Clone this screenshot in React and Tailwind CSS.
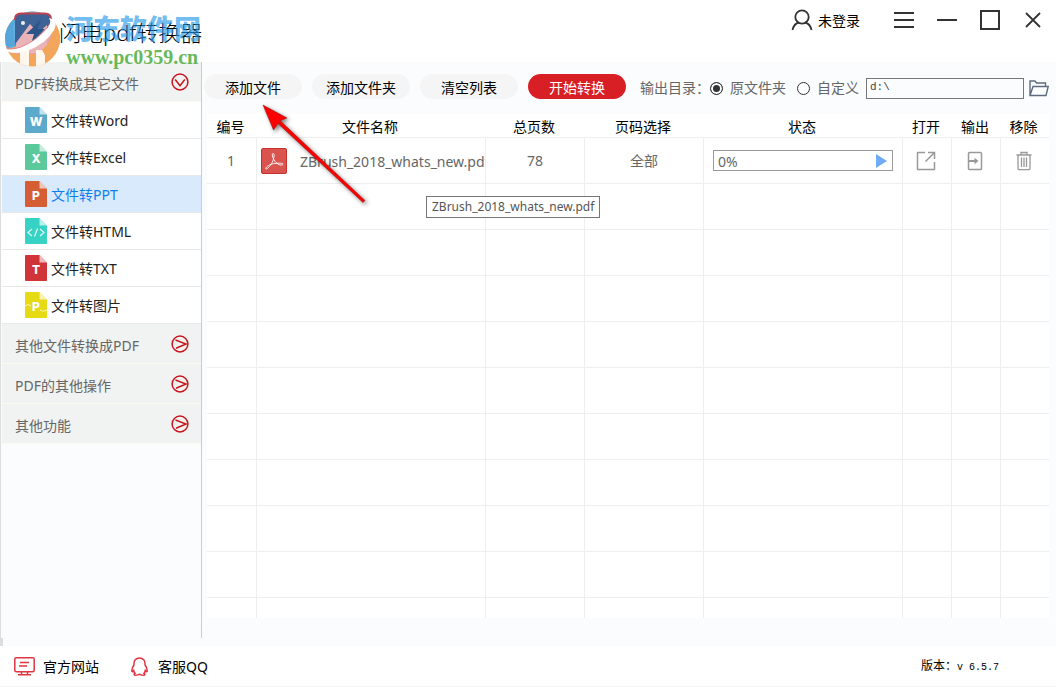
import React from "react";

const navItems = [
  { label: "文件转Word", letter: "W", color: "#5ba9cb" },
  { label: "文件转Excel", letter: "X", color: "#5bc99b" },
  { label: "文件转PPT", letter: "P", color: "#d55d33", active: true },
  { label: "文件转HTML", code: true, color: "#36d3c4" },
  { label: "文件转TXT", letter: "T", color: "#d13438" },
  { label: "文件转图片", letter: "P", color: "#e6da14", wave: true },
];

function FileIcon({ letter, color, code, wave }) {
  return (
    <svg className="h-[26px] w-[22px] shrink-0" viewBox="0 0 22 26" aria-hidden="true">
      <path d="M1 0H14.5L22 7.5V25a1 1 0 0 1-1 1H1a1 1 0 0 1-1-1V1a1 1 0 0 1 1-1Z" fill={color} />
      <path d="M14.5 0L22 7.5H14.5Z" fill="#fff" fillOpacity="0.65" />
      {wave && <path d="M0 14q3-3 6 0M15 18q3 2.500 7 0" fill="none" stroke="#fff" strokeOpacity="0.7" />}
      {code ? (
        <path d="M7 11L3 14.500L7 18M15 11L19 14.500L15 18M12.500 10.500L9.500 18.500" fill="none" stroke="#fff" strokeOpacity="0.85" strokeWidth="1.200" />
      ) : (
        <text x="11" y="19" textAnchor="middle" fontFamily="Inter, sans-serif" fontWeight="800" fontSize="12" fill="#fff">
          {letter}
        </text>
      )}
    </svg>
  );
}

function CircleArrow({ down }) {
  return (
    <svg className="size-[18px] shrink-0" viewBox="0 0 18 18" fill="none" stroke="#c9151e" strokeWidth="1.500" aria-hidden="true">
      <circle cx="9" cy="9" r="7.900" />
      <path d={down ? "M4.200 6.500L9 12.700L13.800 6.500" : "M4.500 5L15 9L5 13.300"} />
    </svg>
  );
}

function NavGroup({ label, down }) {
  return (
    <button type="button" aria-expanded={!!down} className="flex h-10 w-full items-center justify-between border-b border-[#fcfaf0] bg-[#f1f3f2] pt-px pr-3 pl-[13px] text-sm text-[#666]">
      <span className="pt-[3px]">{label}</span>
      <CircleArrow down={down} />
    </button>
  );
}

function AppLogo() {
  return (
    <svg className="h-[58px] w-[58px]" viewBox="0 0 58 58" aria-hidden="true">
      <defs>
        <clipPath id="logo-disc"><circle cx="29.500" cy="29" r="27.500" /></clipPath>
      </defs>
      <g clipPath="url(#logo-disc)">
        <rect width="58" height="58" fill="#f3a55c" />
        <path d="M0 0H58V8L46 16L30 32L0 40Z" fill="#62b0e2" />
        <path d="M12 24V44H49V12L44 14Z" fill="#e3a3a8" />
      </g>
      <path d="M12 34V9Q12 3 18 3H42Q48 3 48 9V16L34 24L12 36Z" fill="#3d6295" />
      <path d="M12 10V9Q12 3.500 18 3.500H42Q48 3.500 48 9V12" fill="none" stroke="#c2414f" strokeWidth="2" />
      <path d="M13 33L27 14L35 23L44 15V43H13Z" fill="#eab3b7" />
      <path d="M38 10L23 24H31L28 34L42 19H34Z" fill="#2c5489" />
      <g clipPath="url(#logo-disc)">
        <path d="M12 10Q8 24 13 35L4 38L0 20Z" fill="#57a6db" />
        <path d="M17 40H26V58H17ZM33 40H42V58H33Z" fill="#fff6ec" />
        <path d="M49 12Q52 29 39 40L45 50L58 34V12Z" fill="#f3a55c" />
      </g>
      <path d="M2 39Q7 46 24 41Q43 34 51 20Q56 10 46 8Q50 13 41 22T20 36Q9 41 2 39Z" fill="#fff" />
      <path d="M3 36Q5 41 18 37Q34 31 46 15" fill="none" stroke="#e3878b" />
      <circle cx="20" cy="13" r="2" fill="#fff" fillOpacity="0.9" />
    </svg>
  );
}

function TitleBar() {
  return (
    <header className="flex h-[62px] items-start justify-between bg-white">
      <div className="relative h-full w-[210px]">
        <h1 className="pt-[18px] pl-[59px] text-[22px] leading-[28px] font-light whitespace-nowrap text-black">闪电pdf转换器</h1>
        <div className="pointer-events-none absolute top-[10px] left-[3px]">
          <AppLogo />
        </div>
        <div className="pointer-events-none absolute top-[13px] left-[66px] z-10 whitespace-nowrap">
          <p className="text-[27px] leading-[32px] font-black text-[#2196ea]/65">河东软件网</p>
          <p className="font-['Liberation_Serif',serif] text-[20px] leading-[24px] font-bold text-[#68b95b]">www.pc0359.cn</p>
        </div>
      </div>
      <div className="flex h-10 items-center pr-[14px] text-[#333]">
        <button type="button" className="flex items-center gap-[5px] text-sm text-black">
          <svg className="size-[22px]" viewBox="0 0 22 22" fill="none" stroke="#333" strokeWidth="1.800" aria-hidden="true">
            <circle cx="11" cy="8" r="6.700" />
            <path d="M1.500 21Q3 14.500 8 13.500M14 13.500Q19 14.500 20.500 21" />
          </svg>
          <span className="pt-[2px]">未登录</span>
        </button>
        <button type="button" aria-label="菜单" className="ml-[33px]">
          <svg className="size-[22px]" viewBox="0 0 22 22" stroke="currentColor" strokeWidth="2" aria-hidden="true"><path d="M1 4H21M1 11H21M1 18H21" /></svg>
        </button>
        <button type="button" aria-label="最小化" className="ml-[21px]">
          <svg className="size-[22px]" viewBox="0 0 22 22" stroke="currentColor" strokeWidth="2" aria-hidden="true"><path d="M1 11H21" /></svg>
        </button>
        <button type="button" aria-label="最大化" className="ml-[21px]">
          <svg className="size-[22px]" viewBox="0 0 22 22" fill="none" stroke="currentColor" strokeWidth="2" aria-hidden="true"><rect x="2" y="2" width="18" height="18" /></svg>
        </button>
        <button type="button" aria-label="关闭" className="ml-[23px]">
          <svg className="size-[18px]" viewBox="0 0 18 18" stroke="currentColor" strokeWidth="1.800" aria-hidden="true"><path d="M2 2L16 16M16 2L2 16" /></svg>
        </button>
      </div>
    </header>
  );
}

function Sidebar() {
  return (
    <div className="flex w-[202px] shrink-0 flex-col">
      <nav className="flex-1 border-r border-l border-[#ccc] border-l-[#ddd] pl-px">
        <NavGroup label="PDF转换成其它文件" down />
        <ul>
          {navItems.map((item) => (
            <li key={item.label} className="border-b border-[#e8e8e8]">
              <a href="#" className={item.active ? "flex h-9 items-center gap-1 bg-[#d8eafc] pl-[23px] text-sm text-[#0d7ef0]" : "flex h-9 items-center gap-1 bg-white pl-[23px] text-sm text-[#222]"}>
                <FileIcon {...item} />
                <span className="pt-[2px]">{item.label}</span>
              </a>
            </li>
          ))}
        </ul>
        <NavGroup label="其他文件转换成PDF" />
        <NavGroup label="PDF的其他操作" />
        <NavGroup label="其他功能" />
      </nav>
      <div className="h-2 w-[3px] bg-[#ddd]" />
    </div>
  );
}

function ToolButton({ children, primary }) {
  return (
    <button type="button" className={primary ? "h-[25px] w-[98px] rounded-full bg-[#d81f26] pt-[3px] text-sm leading-[22px] text-white" : "h-[25px] w-[98px] rounded-full bg-[#f5f5f5] pt-[3px] text-sm leading-[22px] text-black"}>
      {children}
    </button>
  );
}

const radioClass = "size-[13px] appearance-none rounded-full border border-[#333] bg-white checked:border-[#333] checked:bg-[#333] checked:shadow-[inset_0_0_0_2px_#fff]";

function Toolbar() {
  return (
    <div className="flex h-[52px] items-center pr-[7px] pl-[2px]">
      <div className="flex gap-[10px] pb-[3px]">
        <ToolButton>添加文件</ToolButton>
        <ToolButton>添加文件夹</ToolButton>
        <ToolButton>清空列表</ToolButton>
        <ToolButton primary>开始转换</ToolButton>
      </div>
      <div role="radiogroup" aria-label="输出目录" className="ml-[14px] flex items-center text-sm whitespace-nowrap text-[#666]">
        <span className="w-[70px]">输出目录：</span>
        <label className="flex items-center gap-[7px]">
          <input type="radio" name="output" defaultChecked className={radioClass} />
          原文件夹
        </label>
        <label className="ml-[11px] flex items-center gap-[7px]">
          <input type="radio" name="output" className={radioClass} />
          自定义
        </label>
      </div>
      <input type="text" aria-label="自定义目录" defaultValue="d:\" className="ml-[7px] h-[21px] min-w-0 flex-1 border border-[#777] bg-transparent px-[3px] pb-[2px] font-['Liberation_Mono',monospace] text-[11px] leading-4 text-[#444]" />
      <button type="button" aria-label="选择文件夹" className="ml-[5px]">
        <svg className="h-[17px] w-5" viewBox="0 0 20 17" fill="none" stroke="#606b80" strokeWidth="1.400" aria-hidden="true">
          <path d="M1 15.500V1H6L7.500 3H16.500V6M1 15.500L4 6.500H19.200L17 15.500Z" />
        </svg>
      </button>
    </div>
  );
}

const columns = ["编号", "文件名称", "总页数", "页码选择", "状态", "打开", "输出", "移除"];
const cell = "h-[46px] border-r border-b border-[#eee] p-0 last:border-r-0";

function FileTable() {
  return (
    <div className="mr-[7px] ml-[5px] bg-white">
      <table className="w-full table-fixed border-separate border-spacing-0 text-center text-sm text-[#666]">
        <colgroup>
          <col className="w-[50px]" />
          <col />
          <col className="w-[99px]" />
          <col className="w-[119px]" />
          <col className="w-[199px]" />
          <col className="w-[49px]" />
          <col className="w-[49px]" />
          <col className="w-[48px]" />
        </colgroup>
        <thead>
          <tr>
            {columns.map((name) => (
              <th key={name} scope="col" className="h-6 border-b border-[#eee] p-0 pt-[3px] pr-[3px] leading-5 font-normal text-black">{name}</th>
            ))}
          </tr>
        </thead>
        <tbody>
          <tr>
            <td className={cell}><span className="pr-px">1</span></td>
            <td className={cell}>
              <div className="flex items-center overflow-hidden pl-1 whitespace-nowrap">
                <svg className="size-[26px] shrink-0" viewBox="0 0 26 26" aria-hidden="true">
                  <rect x="0.500" y="0.500" width="25" height="25" rx="1.500" fill="#d9534f" stroke="#c9302c" />
                  <path d="M12 5.500C10 6 12.500 12 15 14.500S21 17.800 22 16.300S14 14.800 10 16.300S4 20.500 5 21S10.500 17 12 12.500S13.500 5.300 12 5.500Z" fill="none" stroke="#fff" strokeOpacity="0.9" />
                </svg>
                <span className="ml-[13px] pt-[2px]">ZBrush_2018_whats_new.pdf</span>
              </div>
            </td>
            <td className={cell}>78</td>
            <td className={cell}>全部</td>
            <td className={cell}>
              <div className="mx-[9px] flex h-[21px] items-center justify-between border border-[#999] pr-[5px] pl-1">
                <span className="pt-[2px]">0%</span>
                <button type="button" aria-label="开始">
                  <svg className="h-[14px] w-[11px]" viewBox="0 0 11 14" fill="#6faaf5" aria-hidden="true"><path d="M0 0L11 7L0 14Z" /></svg>
                </button>
              </div>
            </td>
            <td className={cell}>
              <button type="button" aria-label="打开" className="mx-auto block pr-[2px]">
                <svg className="size-5" viewBox="0 0 20 20" fill="none" stroke="#999" strokeWidth="1.500" aria-hidden="true">
                  <path d="M9 1.500H2Q1.500 1.500 1.500 2V18Q1.500 18.500 2 18.500H18Q18.500 18.500 18.500 18V11M12 1.500H18.500V8M18.500 1.500L9.500 10.500" />
                </svg>
              </button>
            </td>
            <td className={cell}>
              <button type="button" aria-label="输出" className="mx-auto block pr-[2px]">
                <svg className="h-5 w-4" viewBox="0 0 16 20" fill="none" stroke="#999" strokeWidth="1.500" aria-hidden="true">
                  <rect x="1.500" y="1.500" width="13" height="17" rx="1" />
                  <path d="M2 10H9" strokeWidth="2" />
                  <path d="M7.500 6.800L11.500 10L7.500 13.200Z" fill="#999" stroke="none" />
                </svg>
              </button>
            </td>
            <td className={cell}>
              <button type="button" aria-label="移除" className="mx-auto block pr-[2px]">
                <svg className="h-5 w-4" viewBox="0 0 16 20" fill="none" stroke="#999" strokeWidth="1.300" aria-hidden="true">
                  <path d="M0.500 4H15.500M5 4V1.500H11V4M2 4V17.500Q2 18.700 3.200 18.700H12.800Q14 18.700 14 17.500V4M5.500 6.500V16M8 6.500V16M10.500 6.500V16" />
                </svg>
              </button>
            </td>
          </tr>
          {Array.from({ length: 9 }, (_, row) => (
            <tr key={row}>
              {columns.map((name) => (
                <td key={name} className={cell} />
              ))}
            </tr>
          ))}
          <tr>
            {columns.map((name) => (
              <td key={name} className="h-5 border-r border-[#eee] p-0 last:border-r-0" />
            ))}
          </tr>
        </tbody>
      </table>
    </div>
  );
}

function Footer() {
  return (
    <footer className="flex h-[41px] items-center border-b border-[#f3f3f3] bg-white pt-px pr-[57px] pl-[14px] text-sm text-black">
      <a href="#" className="flex items-center gap-2">
        <svg className="h-[19px] w-[21px]" viewBox="0 0 21 19" fill="none" stroke="#df3540" strokeWidth="1.500" aria-hidden="true">
          <rect x="0.800" y="0.800" width="19.400" height="14" rx="1.500" />
          <path d="M6 5.500H15M5 9H13M7.500 15V17.500M13.500 15V17.500M4 17.800H17" />
        </svg>
        官方网站
      </a>
      <a href="#" className="ml-8 flex items-center gap-[10px]">
        <svg className="h-[19px] w-[17px]" viewBox="0 0 17 19" fill="none" stroke="#df3540" strokeWidth="1.500" aria-hidden="true">
          <path d="M3 8C2.500 3.500 5 1 8.500 1S14.500 3.500 14 8C15.500 10 16.500 12.500 16 14.500C15.500 15 15 14.500 14.300 13.500C14 15 13.500 15.800 13 16.300C14.500 17 14 18.200 12.500 18.200C10.500 18.200 9.500 17.500 8.500 17.300C7.500 17.500 6.500 18.200 4.500 18.200C3 18.200 2.500 17 4 16.300C3.500 15.800 3 15 2.700 13.500C2 14.500 1.500 15 1 14.500C0.500 12.500 1.500 10 3 8Z" />
        </svg>
        客服QQ
      </a>
      <p className="ml-auto text-[12px] leading-4 text-black">
        版本：<span className="font-['Liberation_Mono',monospace] text-[10px]">v 6.5.7</span>
      </p>
    </footer>
  );
}

export default function App() {
  return (
    <div className="relative flex min-h-screen flex-col bg-[#fbfcfe] font-['Noto_Sans','Noto_Sans_CJK_SC',sans-serif]">
      <TitleBar />
      <div className="flex flex-1">
        <Sidebar />
        <main className="min-w-0 flex-1">
          <Toolbar />
          <FileTable />
        </main>
      </div>
      <Footer />
      <div role="tooltip" className="absolute top-[196px] left-[426px] border border-[#767676] bg-white px-[5px] text-[12px] leading-5 text-[#555]">
        ZBrush_2018_whats_new.pdf
      </div>
      <svg className="pointer-events-none absolute top-[100px] left-[255px] h-[110px] w-[120px] drop-shadow-[2px_2px_2px_rgba(0,0,0,0.5)]" viewBox="0 0 120 110" aria-hidden="true">
        <path d="M8 5L32 18L25.200 20.700L110 100.500L108 102.500L23 23.500L18.500 30Z" fill="#fe0000" stroke="#8a1010" strokeWidth="0.500" />
      </svg>
    </div>
  );
}
